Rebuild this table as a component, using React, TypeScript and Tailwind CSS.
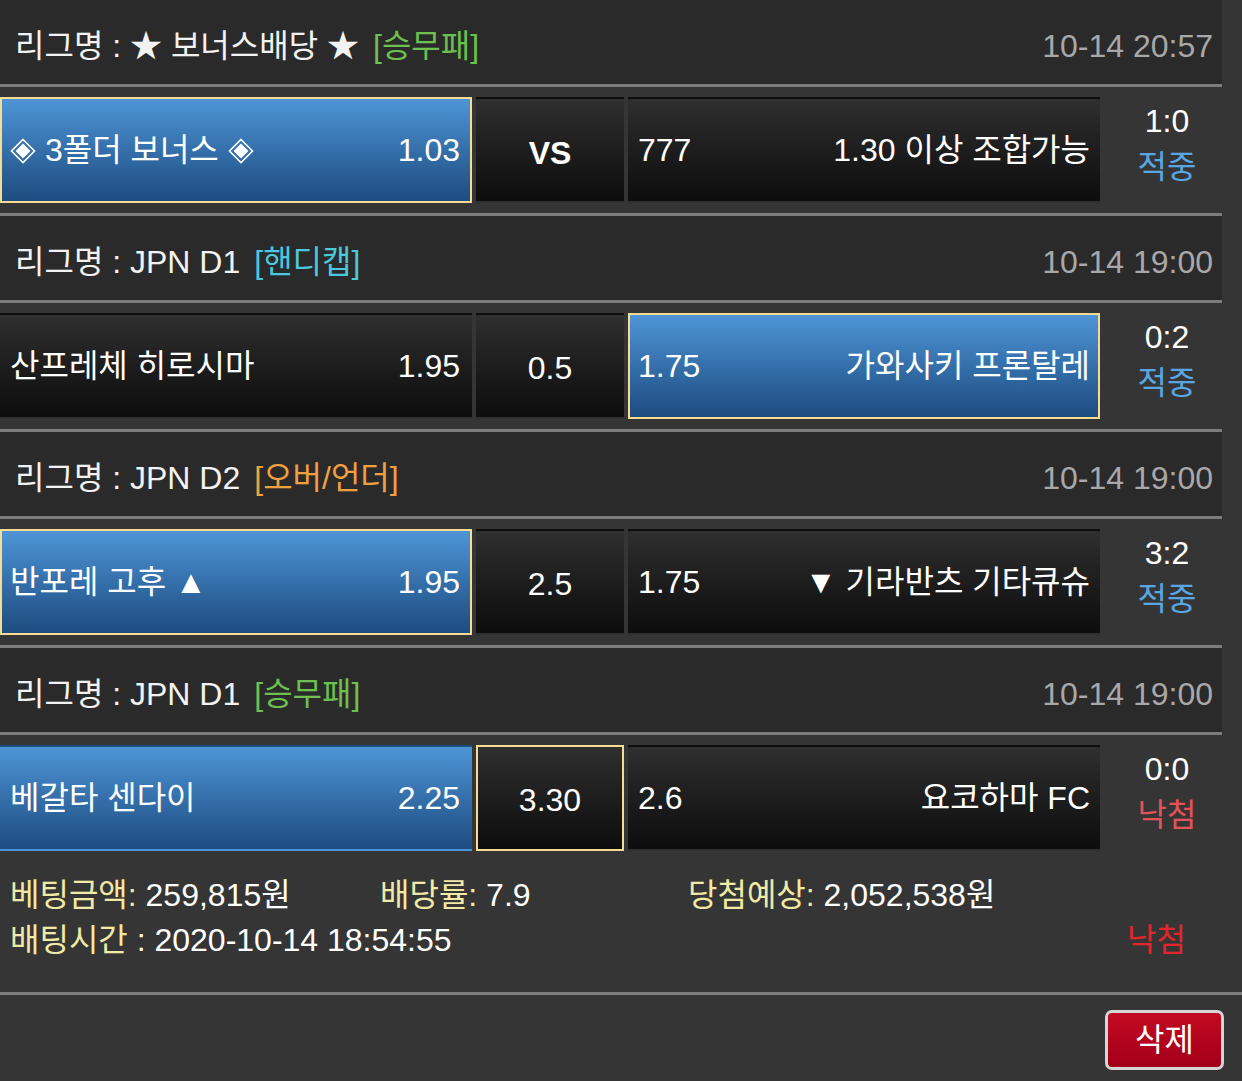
import type { ReactNode } from 'react'

type CellState = 'none' | 'win' | 'picked' | 'both'

interface Match {
  league: string
  kind: string
  kindColor: string
  date: string
  home: { name: ReactNode; odds: string; state: CellState }
  mid: { text: string; state: CellState; bold?: boolean }
  away: { name: string; odds: string; state: CellState }
  score: string
  result: '적중' | '낙첨'
}

// ◈ 모양
const Dia = () => (
  <svg width="26" height="26" viewBox="0 0 26 26" className="inline-block align-[-3px]">
    <path d="M13 1.5 L24.5 13 L13 24.5 L1.5 13 Z" fill="none" stroke="white" strokeWidth="1.6" />
    <path d="M13 5.5 L20.5 13 L13 20.5 L5.5 13 Z" fill="white" />
  </svg>
)

const matches: Match[] = [
  {
    league: '★ 보너스배당 ★',
    kind: '[승무패]',
    kindColor: 'text-[#6cc04f]',
    date: '10-14 20:57',
    home: { name: <><Dia /> 3폴더 보너스 <Dia /></>, odds: '1.03', state: 'both' },
    mid: { text: 'VS', state: 'none', bold: true },
    away: { name: '1.30 이상 조합가능', odds: '777', state: 'none' },
    score: '1:0',
    result: '적중',
  },
  {
    league: 'JPN D1',
    kind: '[핸디캡]',
    kindColor: 'text-[#4cc8dc]',
    date: '10-14 19:00',
    home: { name: '산프레체 히로시마', odds: '1.95', state: 'none' },
    mid: { text: '0.5', state: 'none' },
    away: { name: '가와사키 프론탈레', odds: '1.75', state: 'both' },
    score: '0:2',
    result: '적중',
  },
  {
    league: 'JPN D2',
    kind: '[오버/언더]',
    kindColor: 'text-[#f0a040]',
    date: '10-14 19:00',
    home: { name: '반포레 고후 ▲', odds: '1.95', state: 'both' },
    mid: { text: '2.5', state: 'none' },
    away: { name: '▼ 기라반츠 기타큐슈', odds: '1.75', state: 'none' },
    score: '3:2',
    result: '적중',
  },
  {
    league: 'JPN D1',
    kind: '[승무패]',
    kindColor: 'text-[#6cc04f]',
    date: '10-14 19:00',
    home: { name: '베갈타 센다이', odds: '2.25', state: 'win' },
    mid: { text: '3.30', state: 'picked' },
    away: { name: '요코하마 FC', odds: '2.6', state: 'none' },
    score: '0:0',
    result: '낙첨',
  },
]

function cellClass(state: CellState) {
  const blue = state === 'win' || state === 'both'
  const border = state === 'picked' || state === 'both'
  return `h-[106px] flex items-center border-2 ${border ? 'border-[#f6dc92]' : 'border-transparent'} ${
    blue ? 'bg-gradient-to-b from-[#4e95d7] to-[#1d4c80]' : 'bg-gradient-to-b from-[#2f2f2f] to-[#0d0d0d]'
  }`
}

function Sep({ full }: { full?: boolean }) {
  return <div className={`h-[3px] bg-[#7c7c7c] ${full ? 'w-full' : 'w-[1222px]'}`} />
}

function MatchBlock({ m, first }: { m: Match; first: boolean }) {
  return (
    <>
      {!first && <Sep />}
      {/* 헤더 */}
      <div className="w-[1222px] h-[84px] bg-[#2a2a2a] flex items-center justify-between pl-[15px] pr-[9px] pt-[8px]">
        <div className="text-[#f2f2f2]">
          리그명 : {m.league}
          <span className={`ml-[14px] ${m.kindColor}`}>{m.kind}</span>
        </div>
        <div className="text-[#a8a8a8]">{m.date}</div>
      </div>
      <Sep />
      {/* 배팅 행 */}
      <div className="h-[126px] pt-[10px] flex">
        <div className={`w-[472px] justify-between pl-[8px] pr-[10px] ${cellClass(m.home.state)}`}>
          <span>{m.home.name}</span>
          <span>{m.home.odds}</span>
        </div>
        <div className={`w-[148px] ml-[4px] justify-center ${cellClass(m.mid.state)}`}>
          <span className={m.mid.bold ? 'font-bold pt-[6px]' : 'pt-[4px]'}>{m.mid.text}</span>
        </div>
        <div className={`w-[472px] ml-[4px] justify-between pl-[8px] pr-[8px] ${cellClass(m.away.state)}`}>
          <span>{m.away.odds}</span>
          <span>{m.away.name}</span>
        </div>
        <div className="flex-1 flex flex-col items-center leading-[46px] pr-[8px] pt-[1px]">
          <span>{m.score}</span>
          <span className={m.result === '적중' ? 'text-[#5aa6e2]' : 'text-[#e4525a]'}>{m.result}</span>
        </div>
      </div>
    </>
  )
}

function Label({ children }: { children: ReactNode }) {
  return <span className="text-[#f1e9a6]">{children}</span>
}

export default function App() {
  return (
    <div className="w-[1242px] h-[1081px] overflow-hidden bg-[#353535] text-white text-[32px] leading-none font-['Liberation_Sans','Noto_Sans_CJK_KR',sans-serif]">
      {matches.map((m, i) => (
        <MatchBlock key={i} m={m} first={i === 0} />
      ))}

      {/* 합계 */}
      <div className="pt-[12px] pb-[29px] pl-[10px] pr-[56px] leading-[45px]">
        <div className="flex">
          <div className="w-[370px]">
            <Label>베팅금액:</Label> 259,815원
          </div>
          <div className="w-[308px]">
            <Label>배당률:</Label> 7.9
          </div>
          <div>
            <Label>당첨예상:</Label> 2,052,538원
          </div>
        </div>
        <div className="flex justify-between">
          <div>
            <Label>배팅시간</Label> : 2020-10-14 18:54:55
          </div>
          <span className="text-[#e3262b]">낙첨</span>
        </div>
      </div>
      <Sep full />
      <div className="flex justify-end pt-[15px] pr-[18px]">
        <button className="w-[119px] h-[60px] rounded-[7px] border-[3px] border-[#d6d6d6] bg-gradient-to-b from-[#c40a22] to-[#a30019] text-white text-[32px]">
          삭제
        </button>
      </div>
    </div>
  )
}
